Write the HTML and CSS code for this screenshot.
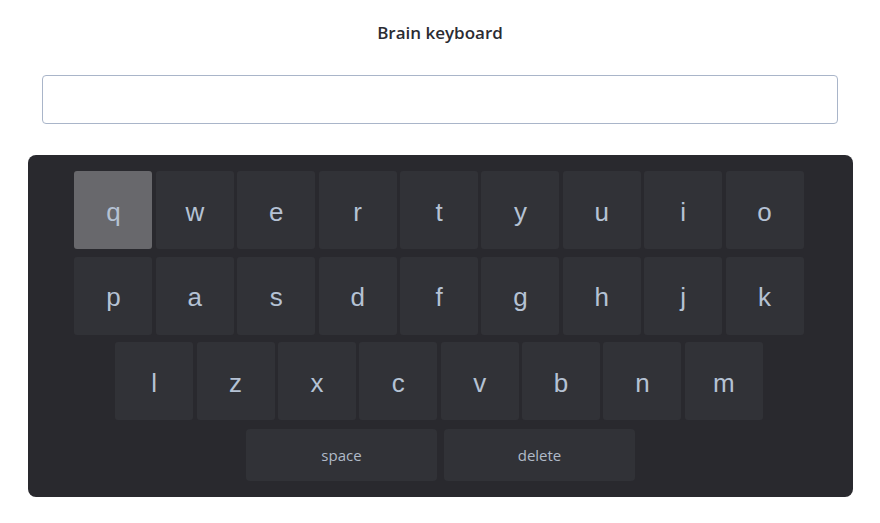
FILE: index.html
```html
<!DOCTYPE html>
<html>
<head>
<meta charset="utf-8">
<link rel="stylesheet" href="styles.css">
</head>
<body>
<div class="page">
  <h1 class="title">Brain keyboard</h1>
  <input class="output" type="text">
  <div class="keyboard">
    <div class="row">
      <div class="key active">q</div><div class="key">w</div><div class="key">e</div><div class="key">r</div><div class="key">t</div><div class="key">y</div><div class="key">u</div><div class="key">i</div><div class="key">o</div>
    </div>
    <div class="row">
      <div class="key">p</div><div class="key">a</div><div class="key">s</div><div class="key">d</div><div class="key">f</div><div class="key">g</div><div class="key">h</div><div class="key">j</div><div class="key">k</div>
    </div>
    <div class="row">
      <div class="key">l</div><div class="key">z</div><div class="key">x</div><div class="key">c</div><div class="key">v</div><div class="key">b</div><div class="key">n</div><div class="key">m</div>
    </div>
    <div class="row">
      <div class="key wide">space</div><div class="key wide">delete</div>
    </div>
  </div>
</div>
</body>
</html>
```
FILE: styles.css
```css
html, body {
  margin: 0;
  padding: 0;
  background: #ffffff;
}
.page {
  width: 880px;
  display: flex;
  flex-direction: column;
  align-items: center;
  font-family: "Open Sans", sans-serif;
}
.title {
  margin: 22px 0 0 0;
  height: 22px;
  line-height: 22px;
  font-size: 17px;
  font-weight: 600;
  color: #2b2c33;
}
.output {
  box-sizing: border-box;
  margin-top: 31px;
  width: 796px;
  height: 49px;
  border: 1px solid #a9b5c9;
  border-radius: 4px;
  background: #fff;
  outline: none;
  padding: 0 12px;
  font-size: 16px;
  align-self: flex-start;
  margin-left: 42px;
}
.keyboard {
  box-sizing: border-box;
  margin-top: 31px;
  align-self: flex-start;
  margin-left: 28px;
  width: 825px;
  height: 342px;
  padding: 16px 0 16px 0;
  background: #29292e;
  border-radius: 8px;
  display: flex;
  flex-direction: column;
  gap: 7.5px;
}
.row {
  display: flex;
  justify-content: center;
  gap: 3.4px;
  padding-right: 3px;
}
.key {
  width: 78px;
  height: 78px;
  background: #313237;
  border-radius: 3px;
  display: flex;
  align-items: center;
  justify-content: center;
  font-family: "Liberation Sans", Arial, sans-serif;
  font-size: 26px;
  color: #b5c2d4;
  padding-top: 4px;
  box-sizing: border-box;
}
.key.active {
  background: #68686c;
}
.row:last-child {
  gap: 7px;
  padding-right: 0;
  margin-top: 1px;
}
.key.wide {
  width: 191px;
  height: 52px;
  font-family: "Open Sans", sans-serif;
  font-size: 15px;
  color: #b0bac8;
  padding-top: 1px;
  border-radius: 4px;
}
```
